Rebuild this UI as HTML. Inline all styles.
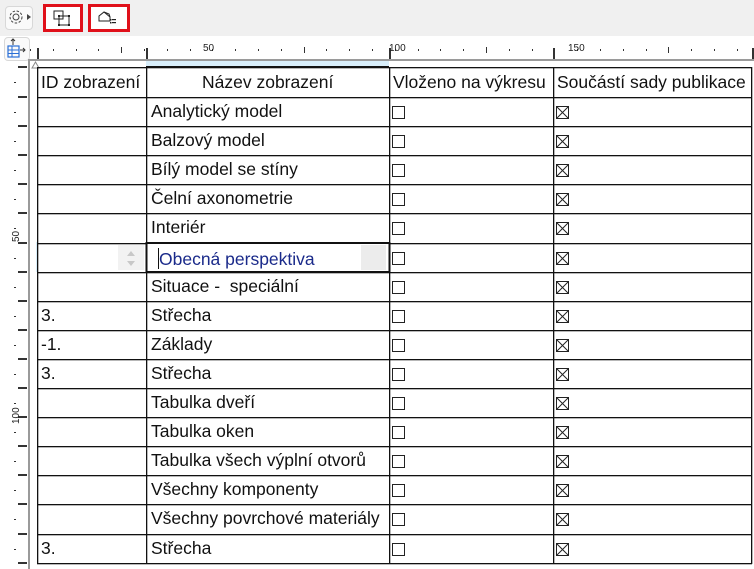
<!DOCTYPE html>
<html><head><meta charset="utf-8"><style>
body{margin:0;width:754px;height:569px;overflow:hidden;background:#fff;font-family:"Liberation Sans","DejaVu Sans",sans-serif;position:relative}
.a{position:absolute}
.tb{left:0;top:0;width:754px;height:36px;background:#f0f0f0}
.cell{position:absolute;font-size:17.5px;color:#111;white-space:nowrap;line-height:29px}
.cb{position:absolute;width:13px;height:13px;border:1px solid #222;box-sizing:border-box}
</style></head><body>
<div class="a tb"></div>
<div class="a" style="left:5px;top:6px;width:26px;height:22px;border:1px solid #d8d8d8;border-radius:4px;background:#fafafa"></div>
<svg class="a" style="left:7px;top:9px" width="26" height="18"><circle cx="9" cy="8" r="3" fill="none" stroke="#444"/><circle cx="9" cy="8" r="6" fill="none" stroke="#444" stroke-dasharray="2.5 1.6"/><path d="M20 5 L24 8 L20 11Z" fill="#444"/></svg>
<div class="a" style="left:43px;top:4px;width:40px;height:28px;box-sizing:border-box;border:3px solid #e0101a;background:#fff"></div>
<svg class="a" style="left:52px;top:10px" width="22" height="18"><rect x="2" y="1" width="9" height="8" fill="none" stroke="#222"/><rect x="7" y="6" width="10" height="9" fill="none" stroke="#222"/><rect x="6" y="5" width="2" height="2" fill="#222"/><rect x="16" y="5" width="2" height="2" fill="#222"/><rect x="6" y="14" width="2" height="2" fill="#222"/><rect x="16" y="14" width="2" height="2" fill="#222"/></svg>
<div class="a" style="left:88px;top:4px;width:42px;height:28px;box-sizing:border-box;border:3px solid #e0101a;background:#fff"></div>
<svg class="a" style="left:97px;top:10px" width="26" height="16"><path d="M2 11 L2 6 L7 2 L12 4 L13 7 L13 11 Z" fill="none" stroke="#222"/><path d="M7 2 L13 7" stroke="#222"/><rect x="13" y="9" width="1.5" height="1.5" fill="#222"/><rect x="15" y="9" width="4" height="1.2" fill="#222"/><rect x="13" y="12" width="1.5" height="1.5" fill="#222"/><rect x="15" y="12" width="4" height="1.2" fill="#222"/></svg>
<div class="a" style="left:4px;top:37px;width:24px;height:22px;border:1px solid #d8d8d8;border-radius:4px;background:#fafafa"></div>
<svg class="a" style="left:6px;top:38px" width="22" height="22"><path d="M7 1 L7 7 M5 3 L7 1 L9 3" stroke="#333" fill="none"/><rect x="2" y="8" width="11" height="11" fill="none" stroke="#2a6fd6" stroke-width="1.2"/><path d="M2 12 H13 M2 15.5 H13 M6 8 V19" stroke="#2a6fd6"/><path d="M14 12 H19 M17 10 L19 12 L17 14" stroke="#333" fill="none"/></svg>
<div class="a" style="left:0;top:62px;width:28px;height:507px;background:#fff"></div>
<div class="a" style="left:28px;top:59px;width:726px;height:2px;background:#9a9a9a"></div>
<div class="a" style="left:28px;top:59px;width:2px;height:510px;background:#9a9a9a"></div>
<svg class="a" style="left:31px;top:61px" width="10" height="8"><path d="M1 7 L4.5 1 L8 7Z" fill="#fff" stroke="#888"/></svg>
<div class="a" style="left:146px;top:61px;width:243px;height:5px;background:#d8eefa"></div>
<svg class="a" style="left:0;top:36px" width="754" height="24" id="rt"></svg>
<svg class="a" style="left:0;top:60px" width="28" height="509" id="rl"></svg>
<svg class="a" style="left:0;top:0" width="754" height="569" id="grid"></svg>
<div id="cells"></div>
<script>
(function(){
var ns="http://www.w3.org/2000/svg";
function el(p,t,a){var e=document.createElementNS(ns,t);for(var k in a)e.setAttribute(k,a[k]);p.appendChild(e);return e}
var rt=document.getElementById('rt');
var i=0;for(var x=30;x<754;x+=22.8,i++){var med=(i%8==4);el(rt,'rect',{x:Math.round(x),y:med?11:13,width:1,height:med?6:2,fill:'#333'});}
[37,146,389,553,752].forEach(function(x){el(rt,'rect',{x:x,y:12,width:2,height:11,fill:'#333'})});
[[203,'50'],[389,'100'],[568,'150']].forEach(function(a){var t=el(rt,'text',{x:a[0],y:15,'font-size':'10','font-family':'Liberation Sans,sans-serif',fill:'#222'});t.textContent=a[1]});
var rl=document.getElementById('rl');
var rows=[];for(var r=0;r<17;r++)rows.push(Math.round(97+r*29.1));
[67].concat(rows).forEach(function(y){el(rl,'rect',{x:18,y:y-60-1,width:9,height:2,fill:'#333'})});
var all=[67].concat(rows);for(var r=0;r<all.length-1;r++){el(rl,'rect',{x:14,y:Math.round((all[r]+all[r+1])/2)-60,width:2,height:1,fill:'#333'})}
[[242,'50'],[424,'100']].forEach(function(a){var t=el(rl,'text',{x:0,y:0,'font-size':'10','font-family':'Liberation Sans,sans-serif',fill:'#222',transform:'translate(19,'+(a[0]-60)+') rotate(-90)'});t.textContent=a[1]});
var g=document.getElementById('grid');
var cols=[37,146,389,553,751];
var tp=67,bot=rows[16];
el(g,'rect',{x:36,y:242,width:2,height:30,fill:'#d8eefa'});
cols.forEach(function(x){el(g,'rect',{x:x,y:tp,width:1.3,height:bot-tp+1,fill:'#111'})});
[tp].concat(rows).forEach(function(y){el(g,'rect',{x:37,y:y,width:715,height:1.3,fill:'#111'})});
el(g,'rect',{x:146,y:66,width:243,height:2,fill:'#111'});
el(g,'rect',{x:146.5,y:243,width:243,height:29,fill:'#fff',stroke:'#111','stroke-width':2});
el(g,'rect',{x:361,y:245,width:25,height:25,fill:'#ececec'});
el(g,'rect',{x:118,y:245,width:26,height:25,fill:'#f2f2f2'});
el(g,'path',{d:'M127 256 L131 251 L135 256Z',fill:'#c8c8c8'});
el(g,'path',{d:'M127 261 L131 266 L135 261Z',fill:'#c8c8c8'});
el(g,'rect',{x:158,y:248,width:1,height:21,fill:'#111'});
var data=[["","Analytický model"],["","Balzový model"],["","Bílý model se stíny"],["","Čelní axonometrie"],["","Interiér"],["","Obecná perspektiva"],["","Situace -&nbsp; speciální"],["3.","Střecha"],["-1.","Základy"],["3.","Střecha"],["","Tabulka dveří"],["","Tabulka oken"],["","Tabulka všech výplní otvorů"],["","Všechny komponenty"],["","Všechny povrchové materiály"],["3.","Střecha"]];
var h='';
function c(x,y,t,st){h+='<div class="cell" style="left:'+x+'px;top:'+y+'px;'+(st||'')+'">'+t+'</div>'}
c(41,67,'ID zobrazení','line-height:30px');c(202,67,'Název zobrazení','line-height:30px');c(393,67,'Vloženo na výkresu','line-height:30px');c(557,67,'Součástí sady publikace','line-height:30px');
data.forEach(function(d,r){var y=rows[r];
 c(41,y,d[0]);
 if(r==5)c(159,y+2,d[1],'color:#1a2a8a');else c(151,y,d[1]);
 h+='<div class="cb" style="left:392px;top:'+(y+9)+'px"></div>';
 h+='<div class="cb" style="left:556px;top:'+(y+9)+'px"><svg width="13" height="13" style="position:absolute;left:-1px;top:-1px"><path d="M1 1 L12 12 M12 1 L1 12" stroke="#222"/></svg></div>';
});
document.getElementById('cells').innerHTML=h;
})();
</script>
</body></html>
